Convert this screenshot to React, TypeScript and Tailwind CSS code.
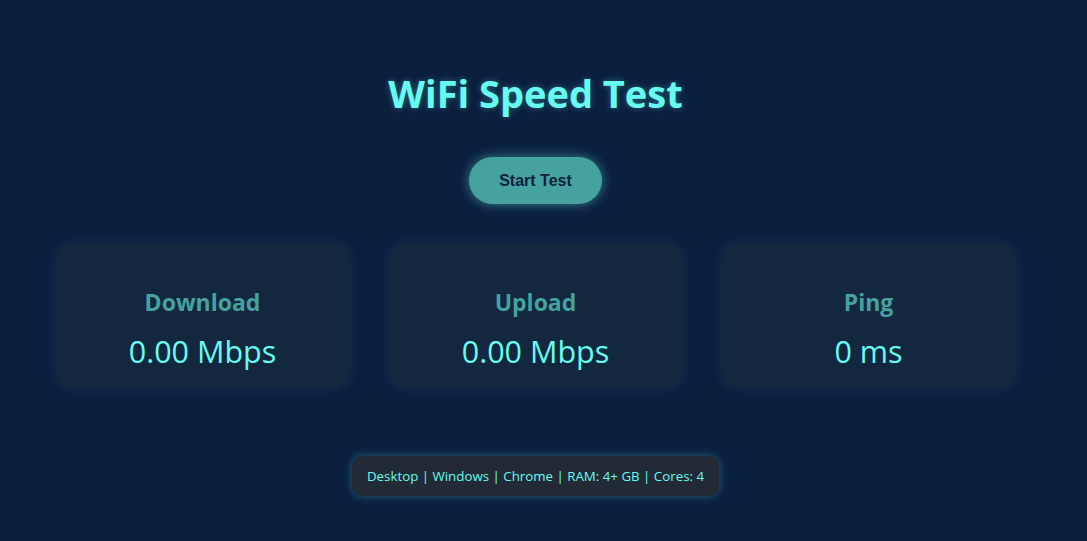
import React from 'react';

const stats = [
  { label: 'Download', value: '0.00 Mbps' },
  { label: 'Upload', value: '0.00 Mbps' },
  { label: 'Ping', value: '0 ms' },
];

export default function App() {
  return (
    <div className="min-h-[541px] w-full bg-[#0b1f3f] font-['Segoe_UI','Open_Sans','Noto_Sans',sans-serif]">
      <div className="w-[1071px] flex flex-col items-center pt-[67px]">
        <h1 className="text-[38px] leading-[53px] font-bold text-[#66fcf1] [text-shadow:0_0_6px_rgba(102,252,241,0.35)]">
          WiFi Speed Test
        </h1>

        <button className="mt-[37px] h-[47px] px-[30px] rounded-full bg-[#45a29e] text-[#0b1f3f] text-[16px] font-bold font-['Liberation_Sans',Arial,sans-serif] shadow-[0_0_12px_rgba(102,252,241,0.45)]">
          Start Test
        </button>

        <div className="mt-[39px] flex gap-[39px]">
          {stats.map((s) => (
            <div
              key={s.label}
              className="w-[294px] h-[145px] rounded-[16px] bg-[#13273f] shadow-[0_0_14px_rgba(102,252,241,0.08)] flex flex-col items-center pt-[44px]"
            >
              <h3 className="text-[23px] leading-[31px] font-bold text-[#45a29e]">{s.label}</h3>
              <p className="mt-[12px] text-[30.5px] leading-[42px] text-[#66fcf1]">{s.value}</p>
            </div>
          ))}
        </div>

        <div className="mt-[68px] rounded-[10px] bg-[#222a36] px-[15px] py-[10px] text-[13.3px] leading-[20px] text-[#66fcf1] shadow-[0_0_10px_rgba(102,252,241,0.3)]">
          Desktop | Windows | Chrome | RAM: 4+ GB | Cores: 4
        </div>
      </div>
    </div>
  );
}
